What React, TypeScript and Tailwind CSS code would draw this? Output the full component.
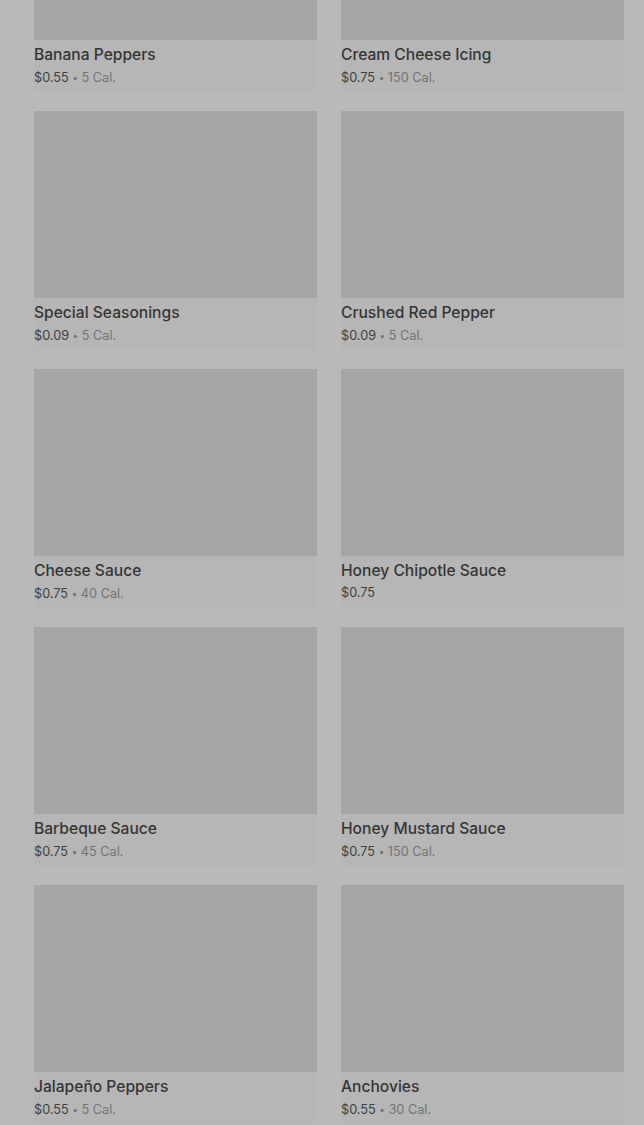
import React from "react";

type Item = { name: string; price: string; cal?: string };

const items: Item[] = [
  { name: "Banana Peppers", price: "$0.55", cal: "5 Cal." },
  { name: "Cream Cheese Icing", price: "$0.75", cal: "150 Cal." },
  { name: "Special Seasonings", price: "$0.09", cal: "5 Cal." },
  { name: "Crushed Red Pepper", price: "$0.09", cal: "5 Cal." },
  { name: "Cheese Sauce", price: "$0.75", cal: "40 Cal." },
  { name: "Honey Chipotle Sauce", price: "$0.75" },
  { name: "Barbeque Sauce", price: "$0.75", cal: "45 Cal." },
  { name: "Honey Mustard Sauce", price: "$0.75", cal: "150 Cal." },
  { name: "Jalapeño Peppers", price: "$0.55", cal: "5 Cal." },
  { name: "Anchovies", price: "$0.55", cal: "30 Cal." },
];

function Card({ item }: { item: Item }) {
  return (
    <div className="flex flex-col bg-[#b6b6b6]">
      <div className="h-[187px] bg-[#a6a6a6]" />
      <div className="h-[52px] pt-[3px]">
        <div className="text-[15.6px] leading-[24px] font-medium text-[#353535]">
          {item.name}
        </div>
        <div className="mt-[1px] text-[12.7px] leading-[18px] text-[#404040]">
          {item.price}
          {item.cal && (
            <span className="text-[#737373]">
              {" "}
              <span className="text-[10px] align-[1px]">•</span> {item.cal}
            </span>
          )}
        </div>
      </div>
    </div>
  );
}

export default function App() {
  return (
    <div
      className="w-[644px] h-[1125px] overflow-hidden bg-[#b9b9b9]"
      style={{ fontFamily: "Inter, 'Noto Sans', sans-serif" }}
    >
      <div className="mt-[-147px] pl-[34px] pr-[20px] grid grid-cols-2 gap-x-[24px] gap-y-[19px]">
        {items.map((it) => (
          <Card key={it.name} item={it} />
        ))}
      </div>
    </div>
  );
}
